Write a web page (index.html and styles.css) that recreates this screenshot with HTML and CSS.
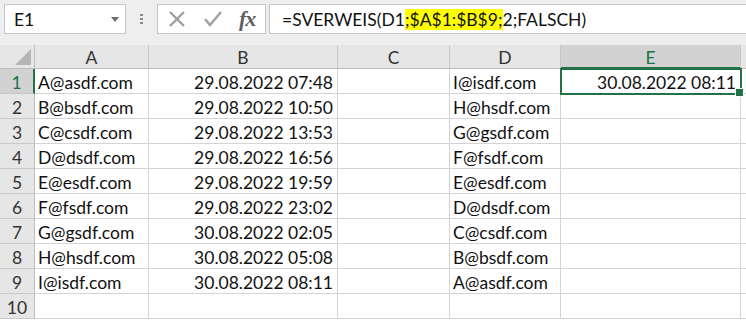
FILE: index.html
```html
<!DOCTYPE html>
<html lang="de">
<head>
    <meta charset="UTF-8">
    <title>SVERWEIS</title>
    <link rel="stylesheet" href="styles.css">
</head>
<body>
    <div class="toolbar">
        <div class="name-box">
            <span>E1</span>
            <svg class="dropdown" width="8" height="5" viewBox="0 0 8 5"><path d="M0 0H8L4 5Z" fill="#6d6d6d"/></svg>
        </div>
        <div class="grip"><i></i><i></i><i></i></div>
        <div class="fx-box">
            <svg width="20" height="20" viewBox="0 0 20 20"><path d="M3 3L17 17M17 3L3 17" stroke="#9c9c9c" stroke-width="2.2" fill="none"/></svg>
            <svg width="20" height="20" viewBox="0 0 20 20"><path d="M2 10L7 16L18 3" stroke="#a3a3a3" stroke-width="2.6" fill="none"/></svg>
            <span class="fx">fx</span>
        </div>
        <div class="formula">=SVERWEIS(D1<mark>;$A$1:$B$9;</mark>2;FALSCH)</div>
    </div>

    <div class="sheet">
        <div class="corner"><div class="tri"></div></div>
        <div class="col-head">A</div>
        <div class="col-head">B</div>
        <div class="col-head">C</div>
        <div class="col-head">D</div>
        <div class="col-head active">E</div>
        <div class="col-head blank"></div>

        <div class="row-head active">1</div>
        <div class="cell">A@asdf.com</div>
        <div class="cell num">29.08.2022 07:48</div>
        <div class="cell"></div>
        <div class="cell">I@isdf.com</div>
        <div class="cell num selected">30.08.2022 08:11</div>
        <div class="cell"></div>

        <div class="row-head">2</div>
        <div class="cell">B@bsdf.com</div>
        <div class="cell num">29.08.2022 10:50</div>
        <div class="cell"></div>
        <div class="cell">H@hsdf.com</div>
        <div class="cell"></div>
        <div class="cell"></div>

        <div class="row-head">3</div>
        <div class="cell">C@csdf.com</div>
        <div class="cell num">29.08.2022 13:53</div>
        <div class="cell"></div>
        <div class="cell">G@gsdf.com</div>
        <div class="cell"></div>
        <div class="cell"></div>

        <div class="row-head">4</div>
        <div class="cell">D@dsdf.com</div>
        <div class="cell num">29.08.2022 16:56</div>
        <div class="cell"></div>
        <div class="cell">F@fsdf.com</div>
        <div class="cell"></div>
        <div class="cell"></div>

        <div class="row-head">5</div>
        <div class="cell">E@esdf.com</div>
        <div class="cell num">29.08.2022 19:59</div>
        <div class="cell"></div>
        <div class="cell">E@esdf.com</div>
        <div class="cell"></div>
        <div class="cell"></div>

        <div class="row-head">6</div>
        <div class="cell">F@fsdf.com</div>
        <div class="cell num">29.08.2022 23:02</div>
        <div class="cell"></div>
        <div class="cell">D@dsdf.com</div>
        <div class="cell"></div>
        <div class="cell"></div>

        <div class="row-head">7</div>
        <div class="cell">G@gsdf.com</div>
        <div class="cell num">30.08.2022 02:05</div>
        <div class="cell"></div>
        <div class="cell">C@csdf.com</div>
        <div class="cell"></div>
        <div class="cell"></div>

        <div class="row-head">8</div>
        <div class="cell">H@hsdf.com</div>
        <div class="cell num">30.08.2022 05:08</div>
        <div class="cell"></div>
        <div class="cell">B@bsdf.com</div>
        <div class="cell"></div>
        <div class="cell"></div>

        <div class="row-head">9</div>
        <div class="cell">I@isdf.com</div>
        <div class="cell num">30.08.2022 08:11</div>
        <div class="cell"></div>
        <div class="cell">A@asdf.com</div>
        <div class="cell"></div>
        <div class="cell"></div>

        <div class="row-head">10</div>
        <div class="cell"></div>
        <div class="cell"></div>
        <div class="cell"></div>
        <div class="cell"></div>
        <div class="cell"></div>
        <div class="cell"></div>
    </div>
</body>
</html>
```

FILE: styles.css
```css
* {
    margin: 0;
    padding: 0;
    box-sizing: border-box;
}

body {
    font-family: Lato, 'Liberation Sans', sans-serif;
    font-size: 17.5px;
    color: #111;
    background: #fff;
    overflow: hidden;
}

.toolbar {
    display: flex;
    align-items: center;
    height: 45px;
    padding: 4px 0 11px 4px;
    background: #eeeeee;
}

.name-box {
    display: flex;
    align-items: center;
    justify-content: space-between;
    width: 122px;
    height: 30px;
    padding: 1px 6px 0 9px;
    background: #fff;
    border: 1px solid #c6c6c6;
}

.grip {
    display: flex;
    flex-direction: column;
    gap: 2px;
    width: 31px;
    align-items: center;
}

.grip i {
    display: block;
    width: 3px;
    height: 2px;
    background: #8a8a8a;
}

.fx-box {
    display: flex;
    align-items: center;
    gap: 16px;
    width: 109px;
    height: 30px;
    padding-left: 9px;
    background: #fff;
    border: 1px solid #c6c6c6;
}

.fx {
    font-family: 'Liberation Serif', serif;
    font-style: italic;
    font-weight: bold;
    font-size: 22px;
    color: #5f5f5f;
    letter-spacing: -1px;
}

.formula {
    flex: 1;
    height: 30px;
    margin-left: 3px;
    padding: 4px 0 0 12px;
    background: #fff;
    border: 1px solid #c6c6c6;
    border-right: none;
    white-space: nowrap;
}

.formula mark {
    background: #ffff00;
    color: inherit;
}

.sheet {
    display: grid;
    grid-template-columns: 35px 114px 189px 112px 111px 180px 1fr;
    grid-template-rows: 24px repeat(10, 25px);
}

.corner {
    display: flex;
    align-items: flex-end;
    justify-content: flex-end;
    padding: 0 3px 3px 0;
    background: #e6e6e6;
    border-right: 1px solid #bdbdbd;
    border-bottom: 1px solid #bdbdbd;
}

.tri {
    width: 16px;
    height: 16px;
    background: #b5b5b5;
    clip-path: polygon(100% 0, 100% 100%, 0 100%);
}

.col-head {
    text-align: center;
    line-height: 23px;
    padding-top: 1px;
    color: #333;
    background: #e6e6e6;
    border-right: 1px solid #c8c8c8;
    border-bottom: 1px solid #bdbdbd;
}

.col-head.active {
    color: #217346;
    background: #d2d2d2;
    border-bottom: 2px solid #217346;
}

.col-head.blank {
    border-right: none;
}

.row-head {
    text-align: center;
    line-height: 24px;
    padding-top: 2px;
    color: #333;
    background: #e6e6e6;
    border-right: 1px solid #bdbdbd;
    border-bottom: 1px solid #c8c8c8;
}

.row-head.active {
    color: #217346;
    background: #d2d2d2;
    border-right: 2px solid #217346;
}

.cell {
    line-height: 24px;
    padding: 2px 3px 0;
    white-space: nowrap;
    overflow: visible;
    border-right: 1px solid #d4d4d4;
    border-bottom: 1px solid #d4d4d4;
}

.cell.num {
    text-align: right;
    padding-right: 4px;
}

.cell.selected {
    position: relative;
    outline: 2px solid #217346;
    outline-offset: -1px;
}

.cell.selected::after {
    content: '';
    position: absolute;
    right: -4px;
    bottom: -4px;
    width: 7px;
    height: 7px;
    background: #217346;
    border: 1px solid #fff;
}
```
